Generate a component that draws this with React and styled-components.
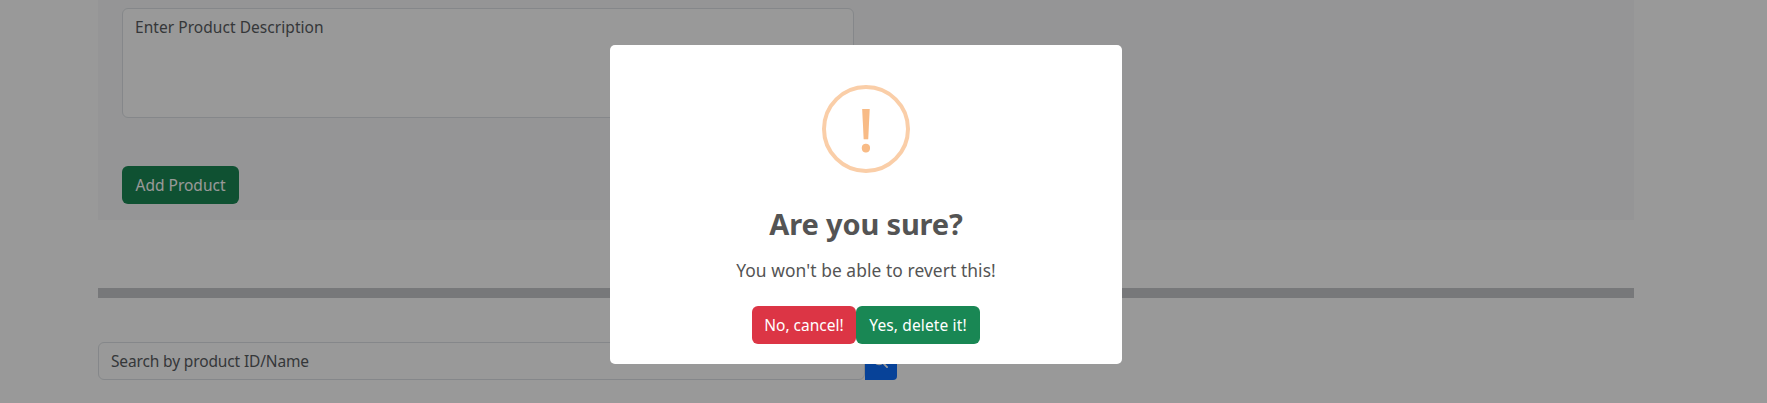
import React from "react";
import styled, { createGlobalStyle } from "styled-components";

const Global = createGlobalStyle`
  * { box-sizing: border-box; }
  html, body { margin: 0; height: 403px; overflow: hidden; }
  body {
    background: #fff;
    color: #212529;
    font: 400 15.5px/24px "Noto Sans", "Open Sans", sans-serif;
  }
`;

const Page = styled.main`
  width: 1536px;
  margin-left: 98px;
`;

const ProductForm = styled.form`
  height: 220px;
  padding: 8px 24px 16px;
  background: #f8f9fa;
  display: flex;
  flex-direction: column;
  align-items: flex-start;
  justify-content: space-between;
`;

const Field = styled.div`
  width: ${(p) => p.$width}px;
  height: ${(p) => p.$height}px;
  padding: 6px 12px;
  border: 1px solid #dee2e6;
  border-radius: 6px;
  background: #fff;
  color: #595c5f;
`;

const Label = styled.span`
  letter-spacing: ${(p) => p.$tracking || 0}px;
  white-space: nowrap;
`;

const tones = { success: "#198754", danger: "#dc3545" };

const Button = styled.button`
  height: 38px;
  width: ${(p) => p.$width}px;
  padding: 0;
  border: 0;
  border-radius: 6px;
  background: ${(p) => tones[p.$tone]};
  color: #fff;
  font: inherit;
  text-align: center;
`;

const Divider = styled.hr`
  height: 10px;
  margin: 68px 0 44px;
  border: 0;
  background: #c7c9cb;
`;

const SearchRow = styled.div`
  display: flex;
`;

const SearchButton = styled.button`
  width: 32px;
  height: 38px;
  padding: 0 1px 2px 0;
  border: 0;
  border-radius: 0 4px 4px 0;
  background: #0d6efd;
  color: #fff;
  display: flex;
  align-items: center;
  justify-content: center;
`;

const Backdrop = styled.div`
  position: fixed;
  inset: 0;
  padding: 45px 0 0 610px;
  background: rgba(0, 0, 0, 0.4);
`;

const Dialog = styled.section`
  width: 512px;
  height: 319px;
  padding-top: 40px;
  border-radius: 5px;
  background: #fff;
  color: #545454;
  display: flex;
  flex-direction: column;
  align-items: center;
`;

const WarningIcon = styled.div`
  width: 88px;
  height: 88px;
  border: 4px solid #facea8;
  border-radius: 50%;
  color: #f8bb86;
  display: flex;
  align-items: center;
  justify-content: center;
  font-size: 60px;
  font-weight: 500;
  line-height: 80px;
`;

const Title = styled.h2`
  margin: 33px 0 0;
  font-size: 29px;
  font-weight: 700;
  line-height: 36px;
`;

const Message = styled.p`
  margin: 15px 0 0;
  font-size: 17.4px;
  line-height: 26px;
`;

const Actions = styled.div`
  display: flex;
  margin-top: 23px;
`;

export default function App() {
  return (
    <>
      <Global />
      <Page>
        <ProductForm>
          <Field $width={732} $height={110}>
            <Label $tracking={0.05}>Enter Product Description</Label>
          </Field>
          <Button type="button" $tone="success" $width={117}>
            <Label>Add Product</Label>
          </Button>
        </ProductForm>
        <Divider />
        <SearchRow>
          <Field $width={767} $height={38}>
            <Label $tracking={-0.14}>Search by product ID/Name</Label>
          </Field>
          <SearchButton aria-label="Search">
            <svg width="15" height="15" viewBox="0 0 16 16" fill="none" stroke="currentColor" strokeWidth="2" strokeLinecap="round">
              <circle cx="6.5" cy="6.5" r="5.5" />
              <path d="M10.6 10.6 L15 15" />
            </svg>
          </SearchButton>
        </SearchRow>
      </Page>
      <Backdrop>
        <Dialog role="dialog">
          <WarningIcon>!</WarningIcon>
          <Title><Label $tracking={-0.15}>Are you sure?</Label></Title>
          <Message><Label $tracking={0.07}>You won't be able to revert this!</Label></Message>
          <Actions>
            <Button type="button" $tone="danger" $width={104}>
              <Label>No, cancel!</Label>
            </Button>
            <Button type="button" $tone="success" $width={124}>
              <Label $tracking={0.13}>Yes, delete it!</Label>
            </Button>
          </Actions>
        </Dialog>
      </Backdrop>
    </>
  );
}
